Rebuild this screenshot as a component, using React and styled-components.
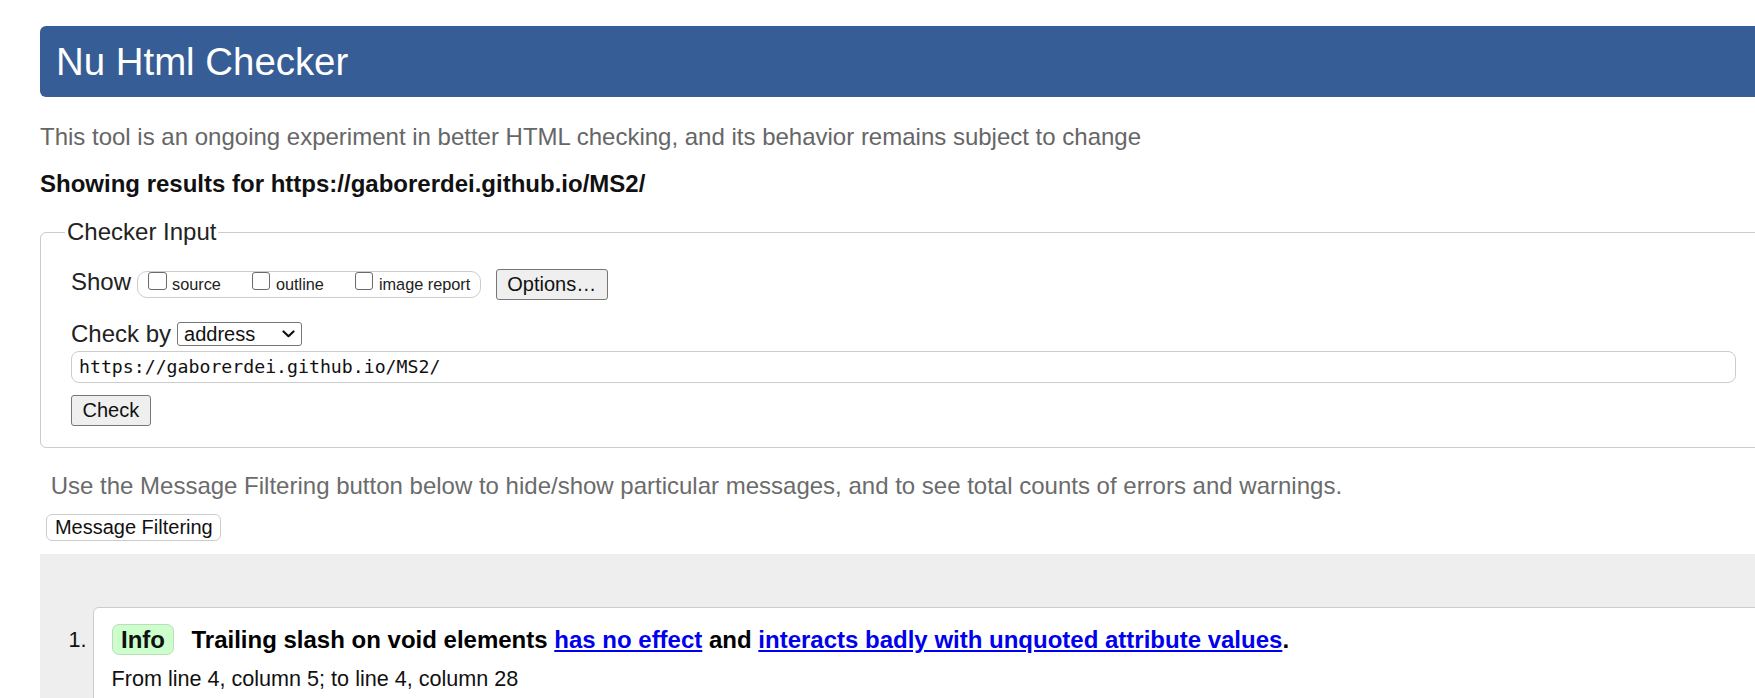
import React from "react";
import styled, { createGlobalStyle } from "styled-components";

const GlobalStyle = createGlobalStyle`
  html, body {
    margin: 0;
    padding: 0;
    overflow: hidden;
    background: #ffffff;
  }
  body {
    font-family: "Liberation Sans", Arial, sans-serif;
    color: #111;
  }
`;

const Page = styled.div`
  width: 1724px;
  padding: 26px 0 0 40px;
`;

const Banner = styled.h1`
  margin: 0;
  padding: 13.5px 16px;
  background: #365d95;
  color: #ffffff;
  font-size: 38.4px;
  font-weight: normal;
  line-height: normal;
  border-radius: 6px;
`;

const Intro = styled.p`
  margin: 26px 0 0;
  font-size: 24px;
  line-height: normal;
  color: #666666;
`;

const Showing = styled.p`
  margin: 19px 0 0;
  font-size: 24px;
  font-weight: bold;
  line-height: normal;
  color: #111111;
`;

const InputSet = styled.fieldset`
  margin: 20px 0 0;
  padding: 22px 27px 21px 30px;
  border: 1px solid #cccccc;
  border-radius: 6px;
  min-width: 0;
  display: flex;
  flex-direction: column;
  align-items: flex-start;
`;

const Legend = styled.legend`
  margin-left: -6px;
  padding: 0 2px;
  font-size: 24px;
  line-height: normal;
  color: #222222;
`;

const Row = styled.div`
  display: flex;
  align-items: center;
  margin-top: ${(p) => p.$top || 0}px;
`;

const FieldLabel = styled.span`
  font-size: 24px;
  line-height: normal;
  color: #222222;
  margin-bottom: ${(p) => p.$lift || 0}px;
`;

const OptionGroup = styled.span`
  display: inline-flex;
  align-items: flex-start;
  gap: 31px;
  height: 27px;
  box-sizing: border-box;
  margin-left: 6px;
  padding: 0 9.5px 0 10px;
  border: 1px solid #cccccc;
  border-radius: 10px;
`;

const CheckLabel = styled.label`
  display: inline-flex;
  align-items: flex-start;
`;

const CheckBox = styled.input.attrs({ type: "checkbox" })`
  appearance: none;
  -webkit-appearance: none;
  width: 18.5px;
  height: 18.5px;
  margin: 0 5.5px 0 0;
  box-sizing: border-box;
  border: 1px solid #6a6a6a;
  border-radius: 3px;
  background: #ffffff;
`;

const CheckText = styled.span`
  font-size: 16.3px;
  line-height: 25px;
  color: #222222;
`;

const GrayButton = styled.button`
  margin-left: ${(p) => p.$left || 0}px;
  margin-top: ${(p) => p.$top || 0}px;
  height: 31px;
  padding: 0 10.5px;
  font-family: "Liberation Sans", Arial, sans-serif;
  font-size: 20px;
  line-height: 29px;
  color: #111111;
  background: #efefef;
  border: 1px solid #767676;
  border-radius: 3px;
`;

const SelectWrap = styled.span`
  position: relative;
  display: inline-block;
  margin-left: 6px;
`;

const Select = styled.select`
  appearance: none;
  -webkit-appearance: none;
  display: block;
  width: 125px;
  height: 24px;
  box-sizing: border-box;
  padding: 0 0 0 6px;
  font-family: "Liberation Sans", Arial, sans-serif;
  font-size: 20px;
  line-height: 22px;
  color: #111111;
  background: #ffffff;
  border: 1px solid #767676;
  border-radius: 3px;
`;

const Chevron = styled.svg`
  position: absolute;
  right: 7px;
  top: 8px;
  width: 13px;
  height: 8px;
  pointer-events: none;
`;

const UrlInput = styled.input`
  margin-top: 3.5px;
  width: 100%;
  height: 31.5px;
  box-sizing: border-box;
  padding: 0 7px;
  font-family: "DejaVu Sans Mono", "Liberation Mono", monospace;
  font-size: 18.2px;
  color: #111111;
  border: 1px solid #cccccc;
  border-radius: 8px;
  background: #ffffff;
`;

const FilterNote = styled.p`
  margin: 24px 0 0 10.7px;
  font-size: 24px;
  line-height: normal;
  color: #6b6b6b;
`;

const FilterButton = styled.button`
  display: block;
  margin: 13.5px 0 0 6.4px;
  height: 27px;
  padding: 0 7.5px;
  font-family: "Liberation Sans", Arial, sans-serif;
  font-size: 20px;
  line-height: 25px;
  color: #111111;
  background: #ffffff;
  border: 1px solid #cccccc;
  border-radius: 6px;
`;

const Results = styled.div`
  margin-top: 13px;
  padding: 53px 0 60px;
  background: #eeeeee;
`;

const MessageList = styled.ol`
  margin: 0;
  padding: 0;
  list-style: none;
`;

const MessageItem = styled.li`
  display: flex;
  align-items: flex-start;
`;

const ItemNumber = styled.span`
  flex: 0 0 52.5px;
  box-sizing: border-box;
  padding: 20px 6px 0 0;
  text-align: right;
  font-size: 21.6px;
  line-height: normal;
  color: #111111;
`;

const MessageCard = styled.div`
  flex: 1;
  padding: 16px 18px 30px;
  background: #ffffff;
  border: 1px solid #cccccc;
  border-radius: 6px;
`;

const MessageHead = styled.div`
  display: flex;
  align-items: baseline;
  gap: 17px;
`;

const Badge = styled.span`
  display: inline-block;
  padding: 0 8.5px;
  font-size: 24px;
  font-weight: bold;
  line-height: 29px;
  color: #111111;
  background: #ccffcc;
  border: 1px solid #bcdcbc;
  border-radius: 7px;
`;

const MessageText = styled.p`
  margin: 0;
  font-size: 24px;
  font-weight: bold;
  line-height: normal;
  color: #000000;
`;

const Link = styled.a`
  color: #0000ee;
  text-decoration: underline;
`;

const Location = styled.p`
  margin: 11.5px 0 0;
  font-size: 21.6px;
  line-height: normal;
  color: #111111;
`;

export default function App() {
  return (
    <>
      <GlobalStyle />
      <Page>
        <Banner>Nu Html Checker</Banner>
        <Intro>
          This tool is an ongoing experiment in better HTML checking, and its
          behavior remains subject to change
        </Intro>
        <Showing>Showing results for https://gaborerdei.github.io/MS2/</Showing>
        <InputSet>
          <Legend>Checker Input</Legend>
          <Row>
            <FieldLabel $lift={4}>Show</FieldLabel>
            <OptionGroup>
              <CheckLabel>
                <CheckBox />
                <CheckText>source</CheckText>
              </CheckLabel>
              <CheckLabel>
                <CheckBox />
                <CheckText>outline</CheckText>
              </CheckLabel>
              <CheckLabel>
                <CheckBox />
                <CheckText>image report</CheckText>
              </CheckLabel>
            </OptionGroup>
            <GrayButton type="button" $left={15}>
              Options…
            </GrayButton>
          </Row>
          <Row $top={19.5}>
            <FieldLabel>Check by</FieldLabel>
            <SelectWrap>
              <Select defaultValue="address">
                <option value="address">address</option>
                <option value="file">file upload</option>
                <option value="text">text input</option>
              </Select>
              <Chevron viewBox="0 0 13 8">
                <polyline
                  points="1.5,1.5 6.5,6.2 11.5,1.5"
                  fill="none"
                  stroke="#111"
                  strokeWidth="2.2"
                  strokeLinecap="round"
                  strokeLinejoin="round"
                />
              </Chevron>
            </SelectWrap>
          </Row>
          <UrlInput
            type="url"
            readOnly
            value="https://gaborerdei.github.io/MS2/"
          />
          <GrayButton type="submit" $top={12.5}>
            Check
          </GrayButton>
        </InputSet>
        <FilterNote>
          Use the Message Filtering button below to hide/show particular
          messages, and to see total counts of errors and warnings.
        </FilterNote>
        <FilterButton type="button">Message Filtering</FilterButton>
        <Results>
          <MessageList>
            <MessageItem>
              <ItemNumber>1.</ItemNumber>
              <MessageCard>
                <MessageHead>
                  <Badge>Info</Badge>
                  <MessageText>
                    Trailing slash on void elements{" "}
                    <Link href="#no-effect">has no effect</Link> and{" "}
                    <Link href="#unquoted">
                      interacts badly with unquoted attribute values
                    </Link>
                    .
                  </MessageText>
                </MessageHead>
                <Location>From line 4, column 5; to line 4, column 28</Location>
              </MessageCard>
            </MessageItem>
          </MessageList>
        </Results>
      </Page>
    </>
  );
}
